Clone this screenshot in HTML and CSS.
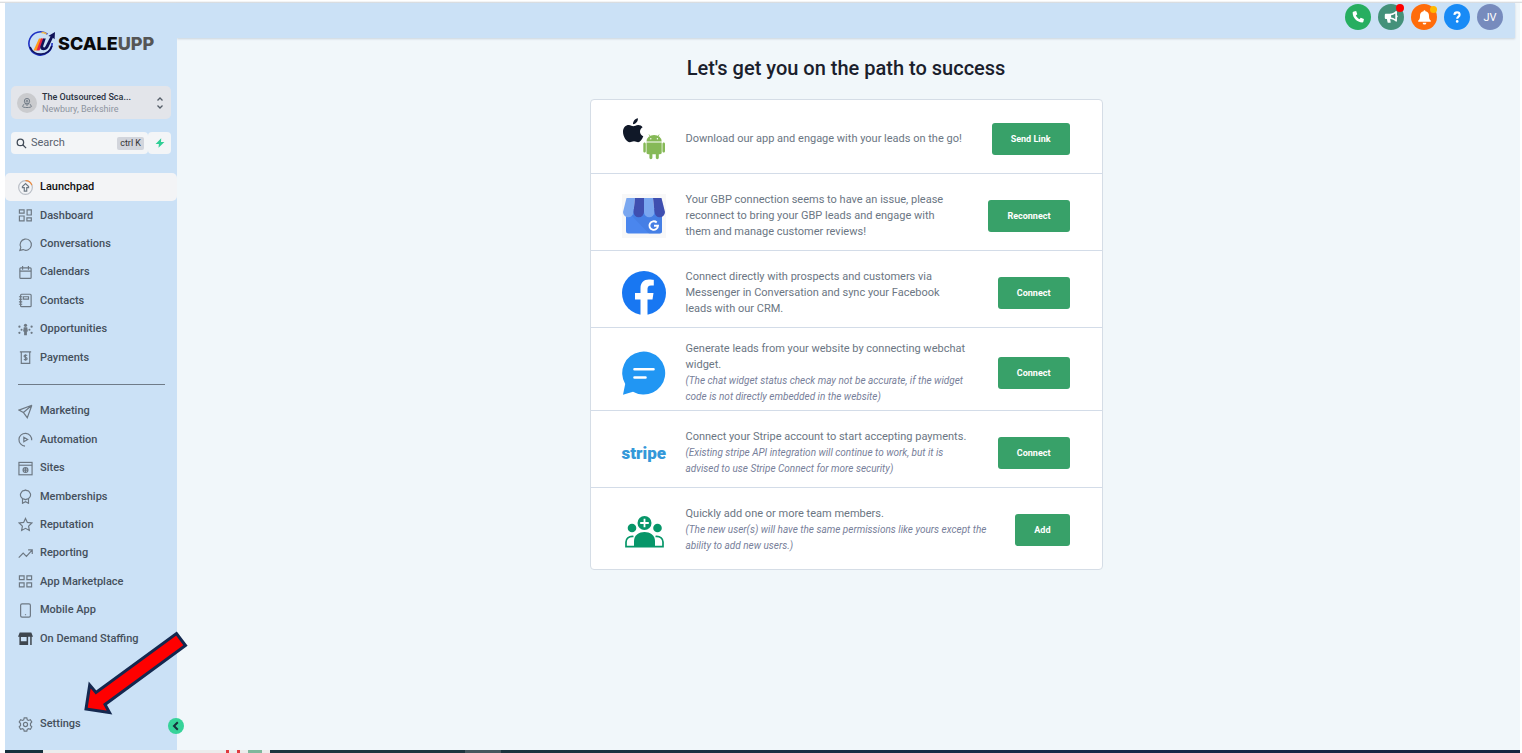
FILE: index.html
```html
<!DOCTYPE html>
<html lang="en">
<head>
<meta charset="utf-8">
<title>Launchpad</title>
<meta name="viewport" content="width=device-width, initial-scale=1">
<link rel="stylesheet" href="styles.css">
</head>
<body>
<div class="frame">
  <aside class="sidebar">
    <a class="brand" href="#" aria-label="ScaleUpp home">
      <svg class="brand-mark" viewBox="0 0 28 28" aria-hidden="true">
        <path d="M20 4.2A11.6 11.6 0 1 0 24.600 13" fill="none" stroke="#1f32c4" stroke-width="1.600"/>
        <path d="M2.500 17a11.600 11.600 0 0 0 21.800-1" fill="none" stroke="#11145c" stroke-width="1.800"/>
        <path d="M14 2.500a12 12 0 0 1 5 1.200" fill="none" stroke="#f2b84a" stroke-width="1.600"/>
        <path d="M6 20.500 11.500 8.500h3.200L9.500 20.500z" fill="#ff9a1a"/>
        <path d="M9 20.500 13.500 8.500l3 0-4.500 12z" fill="#e4234a"/>
        <path d="M15.700 8.500h2.600l-2.600 7.500c-.3 1.800 1.500 2 2.300.3L23 6.500l-2.200-.6L27.500 2l-.4 7.300-1.700-1.500-4.500 9.500c-1.800 4-8.600 4.300-8.200-.5z" fill="#101257"/>
      </svg>
      <span class="brand-name">SCALE<span class="brand-tail">UPP</span></span>
    </a>

    <button class="account" type="button">
      <span class="account-pin">
        <svg viewBox="0 0 16 16" class="line"><circle cx="8" cy="5.500" r="3.600"/><circle cx="8" cy="5.500" r="1.300"/><path d="M5.200 8 8 11.500 10.800 8M4 9.500 2 12.500c0 2 12 2 12 0l-2-3"/></svg>
      </span>
      <span class="account-text">
        <span class="account-name">The Outsourced Sca...</span>
        <span class="account-place">Newbury, Berkshire</span>
      </span>
      <svg class="account-arrows" viewBox="0 0 8 12"><path d="M1.500 3.500 4 1l2.500 2.500M1.500 8.500 4 11l2.500-2.500"/></svg>
    </button>

    <div class="search-row">
      <label class="search">
        <svg class="search-icon" viewBox="0 0 12 12"><circle cx="4.800" cy="4.800" r="3.500"/><path d="m7.400 7.400 3.600 3.600"/></svg>
        <input type="text" placeholder="Search" aria-label="Search">
        <kbd>ctrl K</kbd>
      </label>
      <button class="bolt" type="button" aria-label="Quick actions">
        <svg viewBox="0 0 10 10"><path d="M6.200 .3.600 5.900h3.300L3.500 9.700 9.400 4.100H6z"/></svg>
      </button>
    </div>

    <nav class="nav" aria-label="Main">
      <ul class="nav-list nav-primary">
        <li><a class="active" href="#"><svg viewBox="0 0 16 16" class="line"><circle cx="8" cy="8" r="7.300" stroke="#b9bec6"/><path d="M8 .7A7.300 7.300 0 0 1 14.800 5.500" stroke="#f08a3c"/><path d="M8 3.800 4.700 7v1.200h2v3.600h2.600V8.200h2V7z"/></svg>Launchpad</a></li>
        <li><a href="#"><svg viewBox="0 0 16 16" class="line"><path d="M1.500 2h5v3.500h-5zM9.700 2h4.500v5.500H9.700zM1.500 8.500h5v5.300h-5zM9.500 10.500h4.700v3.300H9.500z"/></svg>Dashboard</a></li>
        <li><a href="#"><svg viewBox="0 0 16 16" class="line"><path d="M2 14.300 3 11A6 6 0 1 1 5.400 13.400z"/></svg>Conversations</a></li>
        <li><a href="#"><svg viewBox="0 0 16 16" class="line"><rect x="2" y="3" width="12" height="11.300" rx="1"/><path d="M2 6.600h12M4.900 1v4M11.100 1v4"/></svg>Calendars</a></li>
        <li><a href="#"><svg viewBox="0 0 16 16" class="line"><rect x="2.800" y="1.300" width="11.200" height="13.200" rx="1"/><path d="M5.700 4h5.500v2.500H5.700zM1 4h3.500M1 6.700h3.500M1 9.400h3.500M1 12h3.500"/></svg>Contacts</a></li>
        <li><a href="#"><svg viewBox="0 0 16 16" class="solid"><circle cx="8" cy="3.500" r="1.700"/><path d="M6.200 5.700h3.600l.8 4.300H9.500v4h-3v-4H5.400z"/><circle cx="1.500" cy="5" r="1.200"/><circle cx="1.500" cy="11.500" r="1.200"/><circle cx="3.800" cy="8.200" r="1.100"/><circle cx="14.500" cy="5" r="1.200"/><circle cx="14.500" cy="11.500" r="1.200"/><circle cx="12.200" cy="8.200" r="1.100"/></svg>Opportunities</a></li>
        <li><a href="#"><svg viewBox="0 0 16 16" class="line"><path d="M2 2h12M3.500 2v12.200h9V2M9.800 5.800c-1-.8-3.300-.7-3.300.9 0 1.500 3.200.9 3.200 2.500 0 1.500-2.300 1.600-3.400.7M8 4.500v7"/></svg>Payments</a></li>
      </ul>
      <hr class="divider">
      <ul class="nav-list nav-secondary">
        <li><a href="#"><svg viewBox="0 0 16 16" class="line"><path d="M14.800 1.300 1 6.500l4.800 2.600zM14.800 1.300 9.900 14.600 5.800 9.100l4-3.400M5.800 9.100l.2 0"/></svg>Marketing</a></li>
        <li><a href="#"><svg viewBox="0 0 16 16" class="line"><path d="M14.600 8.800A6.800 6.800 0 1 0 7.500 15M6.200 5.700v4.700L10.300 8z"/></svg>Automation</a></li>
        <li><a href="#"><svg viewBox="0 0 16 16" class="line"><rect x="1" y="1.500" width="14" height="13.200"/><path d="M1 4.500h14"/><circle cx="8" cy="9.700" r="2.600"/><path d="M5.400 9.700h5.200M8 7.100v5.200"/></svg>Sites</a></li>
        <li><a href="#"><svg viewBox="0 0 16 16" class="line"><path d="M8 1c1.200 1 3.400.5 3.900 2 .6 1.400 2 2 1.400 3.500.4 1.600-1 2.200-1.600 3.300C10.500 11.300 9.200 10.500 8 11.500c-1.200-1-2.500-.2-3.700-1.700C3.700 8.700 2.300 8.100 2.700 6.500 2.100 5 3.500 4.400 4.100 3 4.600 1.500 6.800 2 8 1zM4.800 10.700v4.500L8 13.500l3.200 1.700v-4.500"/></svg>Memberships</a></li>
        <li><a href="#"><svg viewBox="0 0 16 16" class="line"><path d="m8 1.500 2 4.300 4.700.6-3.400 3.300.8 4.700L8 12.100l-4.100 2.300.8-4.700L1.300 6.400 6 5.800z"/></svg>Reputation</a></li>
        <li><a href="#"><svg viewBox="0 0 16 16" class="line"><path d="m.8 12.500 4.700-5 3.500 3.700L15 4.500M10.800 4.200H15.200V8.500"/></svg>Reporting</a></li>
        <li><a href="#"><svg viewBox="0 0 16 16" class="line"><path d="M1.500 2h5v4h-5zM9.500 2h5v4h-5zM1.500 9.500h5v4.300h-5zM9.500 9.500h5v4.300h-5z"/></svg>App Marketplace</a></li>
        <li><a href="#"><svg viewBox="0 0 16 16" class="line"><rect x="2.800" y="1" width="10.400" height="14" rx="1.500"/><path d="M8 12v1"/></svg>Mobile App</a></li>
        <li><a href="#"><svg viewBox="0 0 16 16" class="solid dark"><path fill-rule="evenodd" d="M1.800 1.500h12.400L16 6H0zM1.500 6h9.300v9H1.500zM3.100 6.500v4.300h6.100V6.500zM13 6h1.600v9H13z"/></svg>On Demand Staffing</a></li>
      </ul>
      <a class="settings" href="#"><svg viewBox="0 0 16 16" class="line"><path d="M6.600 1h2.800l.5 2 1.300.7 2-.8 1.500 2.400L13.300 7v2l1.400 1.600-1.500 2.500-2-.7-1.300.7-.5 2H6.600l-.5-2-1.300-.7-2 .7-1.500-2.500L2.700 9V7L1.300 5.300l1.500-2.400 2 .8L6.100 3z"/><circle cx="8" cy="8" r="2.200"/></svg>Settings</a>
    </nav>
    <button class="collapse" type="button" aria-label="Collapse sidebar"><svg viewBox="0 0 16 16"><path d="M9.800 4.300 6 8l3.800 3.700"/></svg></button>
  </aside>

  <div class="page">
    <header class="topbar">
      <button class="round phone" type="button" aria-label="Call"><svg viewBox="0 0 16 16"><path d="M3.300 1.800 5.900 1.200 7.200 4.900 5.500 6.300C6.300 8 7.800 9.600 9.700 10.500L11.100 8.800l3.700 1.400-.6 2.900C14 13.900 13.500 14.200 12.900 14.200 7 14.200 1.900 9 1.900 3.200c0-.8.600-1.200 1.400-1.400z"/></svg></button>
      <button class="round news" type="button" aria-label="Announcements"><svg viewBox="0 0 16 16"><path fill-rule="evenodd" d="M13.500 1.200c.7-.3 1.300 0 1.300.7v4c1.200.4 1.200 2.200 0 2.700v4c0 .7-.7 1-1.300.6C11.600 11.500 9.500 10.500 7 10.300l.6 3.400c.1.600-.2 1-.8 1H4.900c-.4 0-.7-.2-.8-.6L3.300 10.300H2.400C1.500 10.300.9 9.700.9 8.900V5.800C.9 5 1.500 4.400 2.400 4.400h4c2.800 0 5.200-1.300 7.100-3.200zM12.900 4C11.300 5.200 9.700 5.900 8.100 6.100v2.600c1.700.2 3.300.8 4.800 2z"/></svg><span class="dot red"></span></button>
      <button class="round bell" type="button" aria-label="Notifications"><svg viewBox="0 0 16 16"><path d="M7 1.300C7 0 9 0 9 1.300c2.500.5 3.800 2.400 3.800 4.700 0 3 .5 4 1.800 5.200.5.600.2 1.400-.6 1.400H2c-.8 0-1.100-.8-.6-1.400C2.700 10 3.200 9 3.200 6 3.200 3.700 4.500 1.800 7 1.300zM6 13.500h4a2 2 0 0 1-4 0z"/></svg><span class="dot amber"></span></button>
      <button class="round help" type="button" aria-label="Help"><svg viewBox="0 0 16 16"><path d="M5 5.500C5.300 1.600 11 1.900 11 5.300c0 2.300-2.800 2.300-2.800 4.800" fill="none" stroke="#fff" stroke-width="2.400"/><circle cx="8.200" cy="13" r="1.500"/></svg></button>
      <button class="round user" type="button">JV</button>
    </header>

    <main class="content">
      <h1>Let's get you on the path to success</h1>
      <section class="card">
        <div class="row first">
          <svg class="art" viewBox="0 0 44 44">
            <path fill="#101828" d="M11.200 9.200c1.500 0 2.700-1.300 5-1.300 1.900 0 3.400.9 4.400 2.300-3.900 2.300-3.200 7.400.7 9-1.400 3.600-3.300 6-5.100 6-1.700 0-2.300-1-4.200-1s-2.700 1-4.200 1C4.700 25.200 1 19.800 1 14.700 1 10.300 3.700 7.900 6.800 7.900c1.900 0 3.300 1.300 4.400 1.300zM11 7.200C10.900 4.300 13 1.700 15.900 1.200c.3 2.900-2 5.900-4.900 6z"/>
            <g fill="#86b957"><path d="M24.500 24.400a7.600 6.500 0 0 1 15.200 0zM24.500 25.500h15.200v10c0 1-.7 1.700-1.700 1.700h-1.200v3.400c0 2.100-3 2.100-3 0v-3.400h-3.400v3.400c0 2.100-3 2.100-3 0v-3.400h-1.200c-1 0-1.700-.7-1.700-1.700zM21.300 27c0-2 2.500-2 2.500 0v7c0 2-2.500 2-2.500 0zM40.400 27c0-2 2.600-2 2.600 0v7c0 2-2.600 2-2.600 0z"/><path d="m27 17.500 1.500 2.300M37.200 17.500l-1.500 2.300" stroke="#86b957" stroke-width=".8"/></g>
            <circle cx="28.800" cy="21.700" r=".7" fill="#fff"/><circle cx="35.400" cy="21.700" r=".7" fill="#fff"/>
          </svg>
          <div class="copy"><p>Download our app and engage with your leads on the go!</p></div>
          <button class="action" type="button">Send Link</button>
        </div>
        <div class="row">
          <svg class="art" viewBox="0 0 44 44">
            <path fill="#f8f8f8" d="M0 0h44v44H0z"/>
            <path fill="#4a86ee" d="M4 15h36v22a2.500 2.500 0 0 1-2.500 2.500h-31A2.500 2.500 0 0 1 4 37z"/>
            <path fill="#3f78dc" d="m9 21 18 18.500h10.500A2.500 2.500 0 0 0 40 37V21z" opacity=".5"/>
            <path fill="#7aa7f0" d="M4.500 4H13l-1.500 14a5.200 5.200 0 0 1-10.500 0z"/>
            <path fill="#3f4fb0" d="M13 4h9v14a5.200 5.200 0 0 1-10.500 0z"/>
            <path fill="#7aa7f0" d="M22 4h9l1.500 14A5.200 5.200 0 0 1 22 18z"/>
            <path fill="#3f4fb0" d="M31 4h8.500L43 18a5.200 5.200 0 0 1-10.500 0z"/>
            <path d="M34.700 28.500a4.300 4.300 0 1 0 1.300 3.300h-4" fill="none" stroke="#fff" stroke-width="1.900"/>
          </svg>
          <div class="copy"><p>Your GBP connection seems to have an issue, please<br>reconnect to bring your GBP leads and engage with<br>them and manage customer reviews!</p></div>
          <button class="action" type="button">Reconnect</button>
        </div>
        <div class="row">
          <svg class="art" viewBox="0 0 44 44">
            <circle cx="22" cy="22" r="22" fill="#1877f2"/>
            <path fill="#fff" d="M18.500 44V28.400H13V22h5.500v-4.800c0-5.600 3.300-8.600 8.400-8.600 2.400 0 4.900.4 4.900.4v5.400H29c-2.700 0-3.500 1.700-3.500 3.400V22h6l-1 6.400h-5V44z"/>
          </svg>
          <div class="copy"><p>Connect directly with prospects and customers via<br>Messenger in Conversation and sync your Facebook<br>leads with our CRM.</p></div>
          <button class="action" type="button">Connect</button>
        </div>
        <div class="row">
          <svg class="art" viewBox="0 0 44 44">
            <path fill="#2196f3" d="M1 43.700 3.200 33A21.500 21.500 0 1 1 11 40.700z"/>
            <path d="M12.500 18.300h19M12.500 26.500h11" stroke="#fff" stroke-width="2.600" stroke-linecap="round"/>
          </svg>
          <div class="copy"><p>Generate leads from your website by connecting webchat<br>widget.</p><p class="note">(The chat widget status check may not be accurate, if the widget<br>code is not directly embedded in the website)</p></div>
          <button class="action" type="button">Connect</button>
        </div>
        <div class="row">
          <span class="art stripe">stripe</span>
          <div class="copy"><p>Connect your Stripe account to start accepting payments.</p><p class="note">(Existing stripe API integration will continue to work, but it is<br>advised to use Stripe Connect for more security)</p></div>
          <button class="action" type="button">Connect</button>
        </div>
        <div class="row last">
          <svg class="art" viewBox="0 0 44 44">
            <g fill="#079669"><circle cx="22.500" cy="15" r="7"/><circle cx="10" cy="20" r="4.300"/><circle cx="35.500" cy="20" r="4.300"/><path d="M12 39.500V33c0-12 21-12 21 0v6.500z"/></g>
            <path d="M11.500 28.500C6.500 28 4 31 4 34v4.700h8M33.500 28.500C38.500 28 41 31 41 34v4.700h-8" fill="none" stroke="#079669" stroke-width="1.700"/>
            <path d="M22.500 10.700v8.600M18.200 15h8.600" stroke="#fff" stroke-width="1.800"/>
          </svg>
          <div class="copy"><p>Quickly add one or more team members.</p><p class="note">(The new user(s) will have the same permissions like yours except the<br>ability to add new users.)</p></div>
          <button class="action" type="button">Add</button>
        </div>
      </section>
    </main>
  </div>
  <svg class="pointer" viewBox="0 0 108 88" aria-hidden="true"><path d="M4 80 7.700 56 14 63.500 94.500 4.500 103.500 16.500 23 75.500 27.500 83.500z"/></svg>
</div>
<div class="taskbar" aria-hidden="true">
  <span class="start"></span>
  <span class="tray"><i class="mark"></i><i class="mark"></i><i class="mark green"></i></span>
  <span class="space"></span>
  <span class="task"></span>
  <span class="rest"></span>
</div>
</body>
</html>
```
FILE: styles.css
```css
* { box-sizing: border-box; }
body {
  margin: 0;
  min-height: 100vh;
  display: flex;
  flex-direction: column;
  background: linear-gradient(#fff 0, #fff 1px, #d0d3d6 3px, #fff 3px);
  font-family: Roboto, "Liberation Sans", sans-serif;
  font-size: 11px;
  color: #45505c;
}
button { border: 0; padding: 0; font: inherit; color: inherit; cursor: pointer; }
a { color: inherit; text-decoration: none; }
ul, p, h1 { margin: 0; padding: 0; list-style: none; }
svg { display: block; }
.line { fill: none; stroke: #6d7883; stroke-width: 1.25; }
.solid { fill: #6d7883; }
.solid.dark { fill: #3f464e; }

.frame { position: relative; flex: 1; display: flex; margin: 3px 2px 0 5px; background: #f1f7fa; }

/* Sidebar */
.sidebar {
  position: relative;
  flex: none;
  width: 172px;
  display: flex;
  flex-direction: column;
  background: #cbe1f6;
}
.brand { display: flex; align-items: center; height: 28px; margin: 27px 0 0 22px; }
.brand-mark { width: 29px; height: 28px; margin-right: 2px; }
.brand-name { font: 800 18px/28px Inter, sans-serif; color: #0a0a0a; }
.brand-tail { color: #555; }
.account {
  display: flex;
  align-items: center;
  height: 33px;
  margin: 28px 6px 0;
  padding: 0 7px 0 6px;
  border-radius: 5px;
  background: #e3e5ea;
  text-align: left;
}
.account-pin { display: grid; place-items: center; width: 20px; height: 20px; border-radius: 50%; background: #cacbce; }
.account-pin svg { width: 12px; height: 12px; }
.account-text { flex: 1; margin-left: 5px; line-height: 12px; font-size: 9px; white-space: nowrap; }
.account-name { display: block; font-weight: 500; color: #2b3342; }
.account-place { display: block; color: #8d94a0; }
.account-arrows { width: 8px; height: 12px; fill: none; stroke: #555e69; stroke-width: 1.3; }
.search-row { display: flex; margin: 13px 6px 0; height: 22px; }
.search { flex: 1; display: flex; align-items: center; min-width: 0; padding: 0 4px 0 5px; background: #f3f5f7; border-radius: 4px; }
.search-icon { flex: none; width: 11px; height: 11px; fill: none; stroke: #424b57; stroke-width: 1.4; }
.search input { flex: 1; min-width: 0; width: 0; margin-left: 4px; padding: 0; border: 0; outline: 0; background: none; font: 11px/16px Roboto, sans-serif; color: #58616e; }
.search input::placeholder { color: #58616e; opacity: 1; }
.search kbd { padding: 0 3px; border-radius: 2px; background: #d2d5dc; font: 9px/13px Roboto, sans-serif; color: #333; }
.bolt { display: grid; place-items: center; width: 23px; border-radius: 4px; background: #f3f5f7; }
.bolt svg { width: 10px; height: 10px; fill: #2fce95; }

.nav { flex: 1; display: flex; flex-direction: column; margin-top: 19px; font-size: 11px; font-weight: 500; }
.nav-list { display: grid; grid-auto-rows: 1fr; }
.nav-primary { min-height: 199px; }
.nav-secondary { min-height: 256px; }
.nav-list li { display: flex; }
.nav-list a { flex: 1; }
.nav-list a, .settings { display: flex; align-items: center; gap: 7px; padding-left: 13px; line-height: 14px; }
.nav-list svg, .settings svg { width: 15px; height: 15px; }
.nav-list .active { background: #f3f4f6; border-radius: 5px; color: #111; }
.divider { width: 147px; height: 1px; margin: 12px 0 12px 13px; border: 0; background: #6f7b88; }
.settings { height: 28px; margin: auto 0 12px; }
.collapse {
  position: absolute;
  right: -7px;
  bottom: 16px;
  width: 16px;
  height: 16px;
  border-radius: 50%;
  background: #36d399;
}
.collapse svg { fill: none; stroke: #17303c; stroke-width: 2; }

/* Top bar */
.page { flex: 1; min-width: 0; display: flex; flex-direction: column; padding-right: 5px; }
.topbar {
  display: flex;
  justify-content: flex-end;
  gap: 7px;
  height: 35px;
  padding: 1px 12px 0 0;
  background: #cbe1f6;
  box-shadow: 0 1px 2px #c9d3dc;
}
.round { position: relative; display: grid; place-items: center; width: 26px; height: 26px; border-radius: 50%; color: #fff; font-size: 11px; }
.round svg { width: 14px; height: 14px; fill: #fff; }
.phone { background: #27ae60; }
.news { background: #44917a; }
.bell { background: #ff6c0a; }
.help { background: #188bf6; }
.user { background: #778bbd; }
.bell svg { width: 15px; height: 15px; }
.dot { position: absolute; top: 0; right: 0; border-radius: 50%; }
.red { width: 8px; height: 8px; background: #f00; }
.amber { width: 7px; height: 7px; top: 2px; background: #ffb800; }

/* Launch steps */
.content { display: flex; flex-direction: column; align-items: center; padding: 17px 16px 0; }
h1 { font-size: 20px; line-height: 26px; font-weight: 500; color: #1a202c; }
.card { width: 100%; max-width: 513px; margin-top: 18px; background: #fff; border: 1px solid #d5dde6; border-radius: 4px; }
.row {
  display: flex;
  align-items: center;
  min-height: 77px;
  padding: 13px 32px 5px 31px;
  border-bottom: 1px solid #d3dce8;
}
.first { min-height: 74px; padding-top: 9px; }
.last { min-height: 81px; padding-top: 8px; border-bottom: 0; }
.art { flex: none; width: 44px; height: 44px; }
.stripe { font: 900 17px/44px Roboto, sans-serif; color: #3498d9; }
.copy { flex: 1; margin-left: 20px; font-size: 11px; line-height: 16px; color: #6b7683; white-space: nowrap; }
.note { font-size: 10px; font-style: italic; color: #77809a; }
.action {
  flex: none;
  height: 32px;
  padding: 0 19px;
  border-radius: 3px;
  background: #38a169;
  color: #fff;
  font-size: 9px;
  font-weight: 700;
}

/* Arrow laid over the settings link */
.pointer { position: absolute; left: 77px; bottom: 33px; width: 108px; height: 88px; pointer-events: none; }
.pointer path { fill: #f00; stroke: #14284f; stroke-width: 3; }

.taskbar { display: flex; height: 3px; margin: 0 2px 0 5px; }
.start { width: 38px; background: #17303c; }
.tray { display: flex; gap: 8px; width: 227px; padding-left: 183px; background: #ececec; }
.mark { width: 3px; background: #e03a3e; }
.mark.green { width: 14px; background: #7fb79c; }
.space { width: 195px; background: #1d353f; }
.task { width: 36px; background: #46575f; }
.rest { flex: 1; background: linear-gradient(90deg, #1b333d, #14284a 60%, #16233f); }
```
